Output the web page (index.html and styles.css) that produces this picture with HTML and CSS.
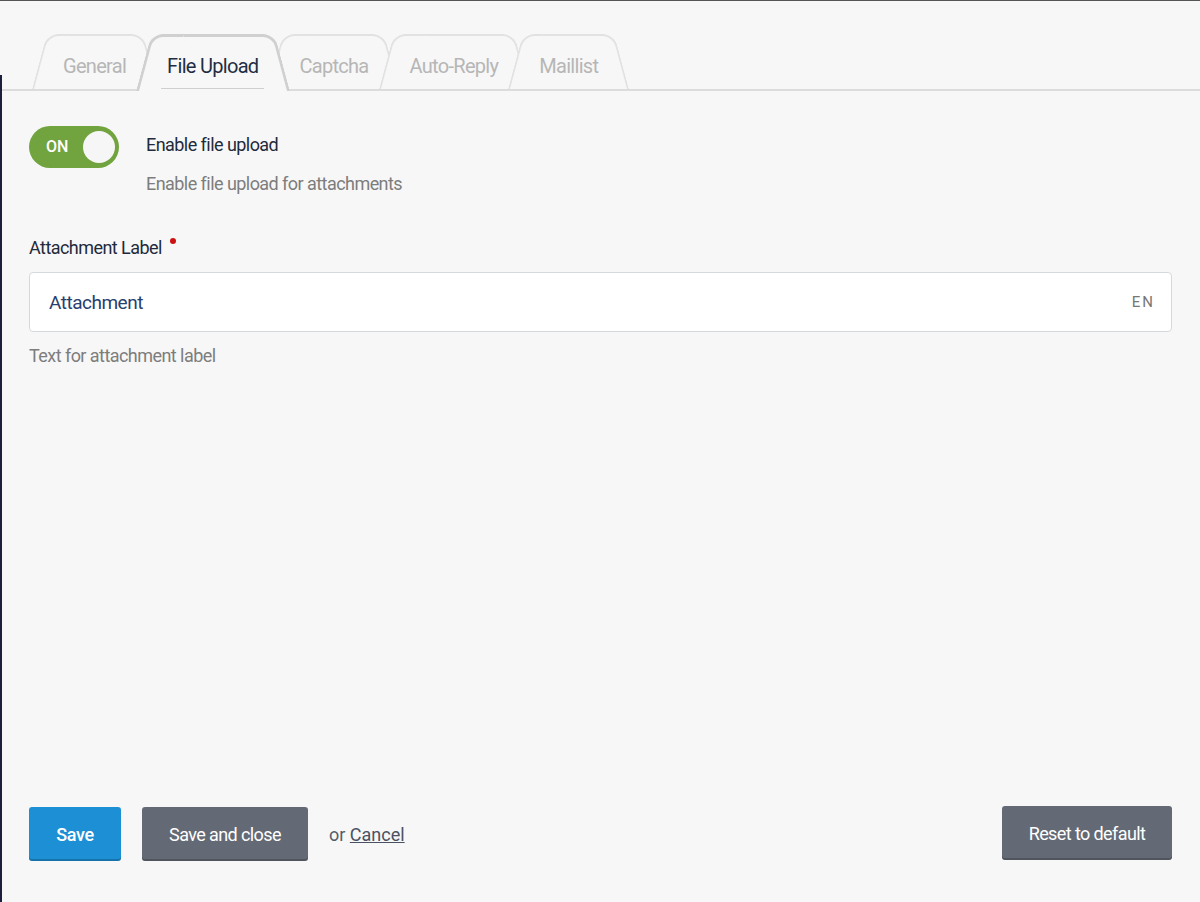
FILE: index.html
```html
<!DOCTYPE html>
<html lang="en">
<head>
    <meta charset="UTF-8">
    <meta name="viewport" content="width=device-width, initial-scale=1.0">
    <title>Form Settings - File Upload</title>
    <link rel="stylesheet" href="styles.css">
</head>
<body>

<div class="edge"></div>

<!-- Tabs -->
<nav class="tabs">
    <a class="tab" style="z-index: 1">General</a>
    <a class="tab active" style="z-index: 10"><span class="tab-label">File Upload</span></a>
    <a class="tab" style="z-index: 3">Captcha</a>
    <a class="tab" style="z-index: 4">Auto-Reply</a>
    <a class="tab" style="z-index: 5">Maillist</a>
</nav>

<main class="content">
    <div class="switch-row">
        <div class="switch on">
            <span class="switch-text">ON</span>
            <span class="switch-knob"></span>
        </div>
        <div>
            <div class="field-title">Enable file upload</div>
            <div class="field-help">Enable file upload for attachments</div>
        </div>
    </div>

    <label class="field-label" for="attachmentLabel">Attachment Label <span class="required"></span></label>
    <div class="input-wrap">
        <input type="text" id="attachmentLabel" value="Attachment">
        <span class="lang">EN</span>
    </div>
    <div class="field-help">Text for attachment label</div>
</main>

<footer class="actions">
    <button class="btn btn-primary">Save</button>
    <button class="btn btn-gray">Save and close</button>
    <span class="or">or <a href="#">Cancel</a></span>
    <button class="btn btn-gray btn-right">Reset to default</button>
</footer>

</body>
</html>
```

FILE: styles.css
```css
* {
    box-sizing: border-box;
}

html, body {
    margin: 0;
}

body {
    font-family: Roboto, "Liberation Sans", sans-serif;
    background-color: #f7f7f7;
    border-top: 1px solid #555;
    min-height: 902px;
    display: flex;
    flex-direction: column;
    position: relative;
    color: #1f2a3c;
}

.edge {
    position: absolute;
    left: 0;
    top: 74px;
    bottom: 0;
    width: 2px;
    background-color: #1c1f3d;
}

/* Tabs */
.tabs {
    display: flex;
    padding: 33px 0 0 53px;
    border-bottom: 2px solid #dcdcdc;
}

.tab {
    position: relative;
    height: 55px;
    padding: 22px 31px 0;
    margin-left: -21px;
    font-size: 20px;
    line-height: 20px;
    letter-spacing: -0.7px;
    color: #b6b6b6;
    cursor: pointer;
}

.tab::before, .tab::after {
    content: '';
    position: absolute;
    top: 0;
    bottom: 0;
    width: 58%;
    z-index: -1;
    background-color: #f7f7f7;
    border: 2px solid #e2e2e2;
    border-bottom: none;
}

.tab::before {
    left: 0;
    border-right: none;
    border-radius: 12px 0 0 0;
    transform-origin: bottom left;
    transform: skewX(-15deg);
}

.tab::after {
    right: 0;
    border-left: none;
    border-radius: 0 12px 0 0;
    transform-origin: bottom right;
    transform: skewX(15deg);
}

.tab.active {
    color: #1f2d44;
    padding: 22px 25px 0;
}

.tab.active::before, .tab.active::after {
    bottom: -2px;
    border-color: #d0d0d0;
    border-width: 3px;
}

.tab-label {
    display: inline-block;
    padding: 0 6px 12px;
    border-bottom: 1px solid #cfcfcf;
}

/* Content */
.content {
    padding: 35px 28px 0 29px;
    letter-spacing: -0.55px;
}

.switch-row {
    display: flex;
    gap: 27px;
    margin-bottom: 40px;
}

.switch {
    position: relative;
    width: 90px;
    height: 42px;
    border-radius: 21px;
    background-color: #71a33f;
    flex-shrink: 0;
    letter-spacing: 0;
}

.switch-text {
    position: absolute;
    left: 17px;
    top: 12px;
    color: #fff;
    font-size: 16px;
    font-weight: 500;
    line-height: 18px;
}

.switch-knob {
    position: absolute;
    right: 4px;
    top: 5px;
    width: 32px;
    height: 32px;
    border-radius: 50%;
    background-color: #f6f6f6;
}

.field-title {
    margin-top: 7px;
    font-size: 18px;
    line-height: 24px;
    margin-bottom: 15px;
}

.field-help {
    font-size: 18px;
    line-height: 24px;
    color: #7d7d7d;
}

.field-label {
    display: block;
    font-size: 18px;
    line-height: 24px;
    margin-bottom: 12px;
}

.required {
    display: inline-block;
    width: 6px;
    height: 6px;
    border-radius: 50%;
    background-color: #cc1111;
    vertical-align: 10px;
    margin-left: 4px;
}

.input-wrap {
    position: relative;
    margin-bottom: 12px;
}

.input-wrap input {
    width: 100%;
    height: 60px;
    padding: 0 60px 0 19px;
    border: 1px solid #d5d9de;
    border-radius: 4px;
    background-color: #fff;
    font-family: inherit;
    font-size: 19px;
    letter-spacing: -0.5px;
    color: #27406f;
    outline: none;
}

.lang {
    position: absolute;
    right: 17px;
    top: 21px;
    font-size: 15px;
    line-height: 18px;
    letter-spacing: 2px;
    color: #777;
}

/* Footer buttons */
.actions {
    margin-top: auto;
    display: flex;
    align-items: center;
    padding: 0 28px 41px 29px;
}

.btn {
    height: 54px;
    border: none;
    border-radius: 3px;
    color: #fff;
    font-family: inherit;
    font-size: 18px;
    font-weight: 400;
    letter-spacing: -0.6px;
    cursor: pointer;
    box-shadow: inset 0 -2px 0 rgba(0, 0, 0, 0.2);
}

.btn-primary {
    width: 92px;
    background-color: #1c8fd5;
    margin-right: 21px;
    font-weight: 500;
    letter-spacing: -0.3px;
}

.btn-gray {
    width: 166px;
    background-color: #646a75;
    margin-right: 21px;
}

.btn-right {
    width: 170px;
    margin-left: auto;
    margin-right: 0;
    position: relative;
    top: -1px;
}

.or {
    font-size: 18px;
    color: #555c69;
}

.or a {
    color: #4a5163;
    text-decoration: underline;
}
```
